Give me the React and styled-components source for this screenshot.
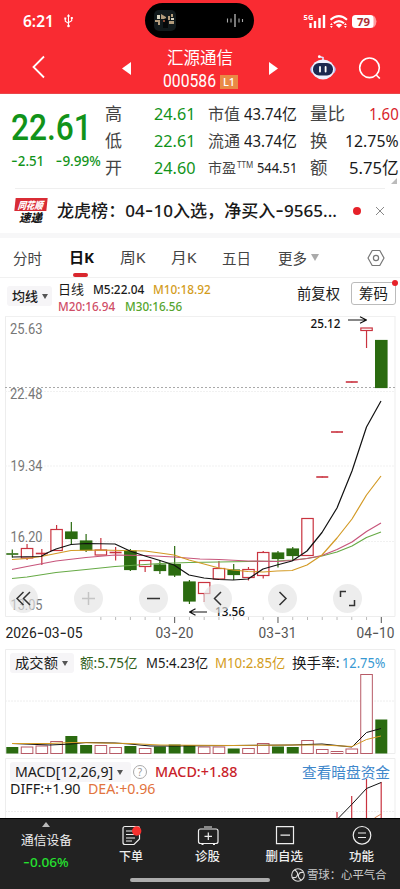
import React, { useLayoutEffect, useRef, useState } from "react";
import styled, { createGlobalStyle } from "styled-components";

const RED = "#f92b32";
const UP = "#c9333f";
const DOWN = "#2b6b10";

// Text squeezed (or stretched) horizontally to a given width
const Fit = ({ w, children, ...rest }) => {
  const ref = useRef(null);
  const [scale, setScale] = useState(1);
  useLayoutEffect(() => {
    setScale(w / ref.current.offsetWidth);
  }, [w, children]);
  return (
    <FitBox $w={w} {...rest}>
      <FitInner ref={ref} style={{ transform: `scaleX(${scale})` }}>
        {children}
      </FitInner>
    </FitBox>
  );
};

// [kind, body top, body bottom, wick top, wick bottom, volume top]
const candles = [
  ["g", 553.5, 554.5, 549.5, 557.5, 747],
  ["r", 548.5, 558, 544, 560, 747],
  ["r", 553, 554, 549, 565, 746],
  ["r", 529.5, 550.5, 525, 550.5, 741.5],
  ["g", 532, 538.5, 522, 544, 736],
  ["g", 541, 550, 534, 552, 745],
  ["r", 550, 555, 538, 555, 745.5],
  ["r", 552, 553, 547, 560.5, 747.5],
  ["g", 551, 569.5, 549, 571, 746],
  ["r", 560.5, 566.5, 560.5, 572, 748.5],
  ["g", 565, 570.5, 560, 574, 746.5],
  ["g", 564.5, 575, 546, 577, 744.5],
  ["g", 582, 601, 580, 604, 745],
  ["r", 582.5, 593.5, 582.5, 602, 747],
  ["r", 568.5, 579, 561, 579, 747],
  ["g", 570, 574.5, 564, 580, 748.5],
  ["r", 569.5, 577.5, 567, 580.5, 748.5],
  ["r", 552.5, 575.5, 551, 578.5, 743.5],
  ["g", 553, 558.5, 551, 567.5, 746.5],
  ["g", 549, 555.5, 547, 560, 747],
  ["r", 518.5, 555.5, 518.5, 555.5, 740.5],
  ["r", 476.5, 477.5, 477, 477, 749.5],
  ["r", 431.5, 432.5, 432, 432, 751.5],
  ["r", 381.5, 382.5, 382, 382, 749],
  ["r", 328, 330.5, 328, 348, 674.5],
  ["g", 340.5, 387.5, 340.5, 387.5, 719.5],
];

const cx = (i) => 12.3 + i * 14.76;

const Candle = ({ i, data }) => {
  const [kind, top, bottom, high, low] = data;
  const color = kind === "g" ? DOWN : UP;
  const x = cx(i);
  return (
    <g stroke={color} strokeWidth="1.2">
      <path d={`M${x} ${high}V${top}M${x} ${bottom}V${low}`} />
      {bottom - top <= 1 ? (
        <path d={`M${x - 6} ${top + 0.5}H${x + 6}`} strokeWidth="1.6" />
      ) : (
        <rect
          x={x - 5.7}
          y={top}
          width="11.4"
          height={bottom - top}
          fill={kind === "g" ? DOWN : "#fff"}
        />
      )}
    </g>
  );
};

const SvgDash = () => <tspan fontFamily="Inter" fontSize="16">-</tspan>;

const KLineChart = () => (
  <svg width="400" height="333" viewBox="0 316 400 333">
    <path d="M5.5 316V616.5H395V316" fill="none" stroke="#ededed" />
    <path d="M5 316.5H395" stroke="#f0f0f0" />
    <path d="M5 391.5H395M5 466H395M5 541.5H395" stroke="#f1f1f1" strokeDasharray="2 1" />
    <path d="M5 387.5H395" stroke="#a9a9a9" strokeDasharray="2 2" />
    {candles.map((c, i) => (
      <Candle key={i} i={i} data={c} />
    ))}
    <g fill="none" strokeWidth="1.2" strokeLinejoin="round">
      <polyline
        stroke="#67aa46"
        points="12,578.5 27,577 56,572.5 86,569.5 115,566.5 160,563.5 189,562.5 248,561.5 277,561 292,560 307,558.5 322,556 337,552 352,546 366.5,537.5 381,532"
      />
      <polyline
        stroke="#c7557b"
        points="12,569.5 27,566.5 56,561 86,557.5 115,555 145,555.5 174,557 200,559 219,559.5 248,561 277,561.5 292,560.5 307,558.5 322,555.5 337,549.5 352,542 366.5,531.5 381,523"
      />
      <polyline
        stroke="#d39a25"
        points="12,559.5 27,558.5 41,556.5 71,550.5 100,550 145,551 160,553 174,555 189,560 204,564 219,568 233,570 248,571.5 263,572 277,571 292,570.5 307,565 322,555 337,538 352,519 366.5,495 381,476"
      />
      <polyline
        stroke="#111"
        points="12,557 41,556.5 47,553 56,549 71,544.5 86,543.5 115,544 130,551 145,556 160,560.5 174,565 189,575 204,578 219,579.5 233,580 248,579 263,569 277,565 292,561 307,551 322,532.5 337,508 352,471 366.5,427 381,401"
      />
      <path
        stroke="#111"
        d="M348 320H366M360 316.8L366.5 320L360 323.2M207 612H190M195.5 608.8L189.5 612L195.5 615.2"
      />
    </g>
    <PriceText x="10" y="333.5" textLength="32.5">25.63</PriceText>
    <PriceText x="10" y="398.5" textLength="32.5">22.48</PriceText>
    <PriceText x="10.5" y="470.5" textLength="32">19.34</PriceText>
    <PriceText x="10.5" y="541.5" textLength="32">16.20</PriceText>
    <PriceText x="10.5" y="610" textLength="32">13.05</PriceText>
    <MarkText x="310.5" y="328" textLength="30">25.12</MarkText>
    <MarkText x="215" y="615.5" textLength="30">13.56</MarkText>
    {candles.map((c, i) =>
      i < 6 ? null : (
        <path
          key={i}
          d={`M${cx(i)} 617V${[11, 18, 25].includes(i) ? 623 : 620}`}
          stroke={[11, 18, 25].includes(i) ? "#555" : "#bbb"}
        />
      )
    )}
    <DateText x="5.5" y="638" textLength="77" fill="#222">2026<SvgDash />03<SvgDash />05</DateText>
    <DateText x="155.5" y="638" textLength="38">03<SvgDash />20</DateText>
    <DateText x="258.5" y="638" textLength="38">03<SvgDash />31</DateText>
    <DateText x="356.5" y="638" textLength="38">04<SvgDash />10</DateText>
  </svg>
);

const VolumeChart = () => (
  <svg width="400" height="109" viewBox="0 649 400 109">
    <path d="M5.5 753.5V649.5H395V753.5Z" fill="none" stroke="#ededed" />
    <path d="M5 701H395" stroke="#eee" strokeDasharray="2 1" />
    {candles.map((c, i) => (
      <rect
        key={i}
        x={cx(i) - (c[0] === "g" ? 6 : 5.8)}
        y={c[5]}
        width={c[0] === "g" ? 12 : 11.6}
        height={753.5 - c[5]}
        fill={c[0] === "g" ? DOWN : "#fff"}
        stroke={c[0] === "g" ? "none" : "#b75b67"}
      />
    ))}
    <polyline
      fill="none"
      stroke="#111"
      points="12,743.5 50,745 71,744 86,742.5 115,743 130,744 150,746 174,746 233,745.5 292,745 322,744 352,747 366.5,732.5 381,728.5"
    />
    <polyline
      fill="none"
      stroke="#d39a25"
      points="12,743.5 50,743.5 71,742.5 100,743 130,743.5 160,745 233,745.5 292,745 322,745 352,746.5 366.5,739.5 381,736"
    />
  </svg>
);

const MacdChart = () => (
  <svg width="400" height="60" viewBox="0 758 400 60">
    <path d="M5.5 818V758.5H395V818" fill="none" stroke="#ededed" />
    <path d="M5 811.5H395" stroke="#eee" strokeDasharray="2 1" />
    <path d="M337 812V818M351.7 796V818M366.5 779V818M381.2 782V818" stroke={UP} strokeWidth="1.2" />
    <path d="M338.5 818L351.7 804.5L366.5 788.5L381.2 782.5" fill="none" stroke="#111" />
    <path d="M374.5 818L381.2 814" stroke="#d98555" />
  </svg>
);

const StatusBar = () => (
  <Status>
    <Clock>
      <Fit w={31}>6:21</Fit>
    </Clock>
    <UsbIcon width="9" height="14" viewBox="0 0 9 14" fill="none" stroke="#fff" strokeWidth="1.1">
      <path d="M4.5 1V11M1.3 5V7.2L4.5 9.4M7.7 4.5V6.6L4.5 8.6" />
      <circle cx="4.5" cy="12" r="1.3" fill="#fff" stroke="none" />
      <path d="M4.5 0L6.2 2.6H2.8Z" fill="#fff" stroke="none" />
      <path d="M.3 3.6H2.3V5.4H.3ZM6.8 3H8.8V5H6.8Z" fill="#fff" stroke="none" />
    </UsbIcon>
    <Island>
      <svg width="22" height="21" viewBox="0 0 22 21">
        <rect width="22" height="21" rx="5" fill="#121a1c" />
        <path d="M1 10H6V15H4V12H1ZM7 4L12 7V9H7ZM14 6H16V10H14ZM17 4H19V7H17ZM15 11H20V14H15Z" fill="#b39c7c" />
        <path d="M3 5H6V9H3ZM17 8H20V10H17Z" fill="#d8d2bf" />
        <path d="M11 8L14 10V18H9V12Z" fill="#06090a" />
        <path d="M9 10H11V12H9Z" fill="#8a4a35" />
      </svg>
      <svg width="18" height="13" viewBox="0 0 18 13" stroke="#aaa" strokeWidth="1.1">
        <path d="M1.5 4.5V8.5M5 4.5V8.5M13 4.5V8.5M16.5 5V8" />
        <path d="M9 0V13" stroke="#ddd" />
      </svg>
    </Island>
    <Signals>
      <svg width="74" height="18" viewBox="304 11 74 18">
        <text x="304.5" y="18.5" fontSize="7.5" fontWeight="700" fill="#fff" textLength="10">5G</text>
        <path d="M311.5 27V22M316 27V20M320.5 27V17M325 27V14" stroke="#fff" strokeWidth="2.4" />
        <g fill="none" stroke="#fff" strokeWidth="2.1">
          <path d="M331.5 18.8Q340 11.6 348 18.8" />
          <path d="M334.8 22.3Q340 17.8 345 22.3" />
        </g>
        <path d="M340 27L336.8 24Q340 21.6 343.2 24Z" fill="#fff" />
        <path d="M331 24L332.4 22L333.8 24ZM331 25L332.4 27L333.8 25ZM345 24L346.4 22L347.8 24ZM345 25L346.4 27L347.8 25Z" fill="#fff" />
        <rect x="353" y="14" width="22" height="13" rx="3.5" fill="#fff" />
        <path d="M374.5 14.2Q377.5 17 377.5 20.5T374.5 26.8Z" fill="#ff9a9d" />
        <text x="358" y="24.7" fontSize="11" fontWeight="700" fill="#ad3035" textLength="13" lengthAdjust="spacingAndGlyphs">79</text>
      </svg>
    </Signals>
  </Status>
);

const TitleBar = () => (
  <Title>
    <BackIcon width="13" height="24" viewBox="0 0 13 24">
      <path d="M12 1.5L1.5 12L12 22.5" fill="none" stroke="#fff" strokeWidth="1.8" />
    </BackIcon>
    <PrevIcon width="9" height="13" viewBox="0 0 9 13">
      <path d="M9 0V13L0 6.5Z" fill="#fff" />
    </PrevIcon>
    <StockName>
      <Fit w={66}>汇源通信</Fit>
      <CodeRow>
        <Code>
          <Fit w={53}>000586</Fit>
        </Code>
        <Level>L1</Level>
      </CodeRow>
    </StockName>
    <NextIcon width="9" height="13" viewBox="0 0 9 13">
      <path d="M0 0V13L9 6.5Z" fill="#fff" />
    </NextIcon>
    <RobotIcon width="26" height="25" viewBox="0 0 26 25">
      <path d="M9 1.5L13 2.5V6" fill="none" stroke="#dfe1ff" strokeWidth="1.6" />
      <circle cx="9.3" cy="1.7" r="1.4" fill="#fff" />
      <ellipse cx="13" cy="14.5" rx="12.7" ry="7" fill="#b9bdf3" />
      <ellipse cx="13" cy="14.4" rx="11.2" ry="10" fill="#eef0ff" />
      <rect x="3" y="8" width="20" height="12.5" rx="6" fill="#1c2850" />
      <path d="M10 12V16.5M15.6 12V16.5" stroke="#fff" strokeWidth="1.8" strokeLinecap="round" />
    </RobotIcon>
    <SearchIcon width="24" height="24" viewBox="0 0 24 24" fill="none" stroke="#fff" strokeWidth="1.6">
      <circle cx="11.5" cy="11.8" r="9.8" />
      <path d="M18 18.7L21.8 22.5" />
    </SearchIcon>
  </Title>
);

const Quote = () => (
  <QuotePanel>
    <PriceBlock>
      <BigPrice>
        <Fit w={81}>22.61</Fit>
      </BigPrice>
      <Change>
        <Fit w={33.5}><Dash>-</Dash>2.51</Fit>
        <Fit w={45}><Dash>-</Dash>9.99%</Fit>
      </Change>
    </PriceBlock>
    <Column $w={90}>
      <Cell><Label>高</Label><Value $color="#11931a"><Fit w={41}>24.61</Fit></Value></Cell>
      <Cell><Label>低</Label><Value $color="#11931a"><Fit w={41}>22.61</Fit></Value></Cell>
      <Cell><Label>开</Label><Value $color="#11931a"><Fit w={41}>24.60</Fit></Value></Cell>
    </Column>
    <Column $w={89}>
      <Cell><Label $size={16}>市值</Label><Value $size={16}><Fit w={53}>43.74亿</Fit></Value></Cell>
      <Cell><Label $size={16}>流通</Label><Value $size={16}><Fit w={53}>43.74亿</Fit></Value></Cell>
      <Cell>
        <Label $size={14}>市盈<Sup>TTM</Sup></Label>
        <Value $size={14.5}><Fit w={40}>544.51</Fit></Value>
      </Cell>
    </Column>
    <Column $w={89}>
      <Cell><Label $size={17.5}>量比</Label><Value $color="#d8232b"><Fit w={30}>1.60</Fit></Value></Cell>
      <Cell><Label $size={17.5}>换</Label><Value><Fit w={54}>12.75%</Fit></Value></Cell>
      <Cell><Label $size={17.5}>额</Label><Value><Fit w={50}>5.75亿</Fit></Value></Cell>
    </Column>
    <Corner />
  </QuotePanel>
);

const News = () => (
  <NewsBar>
    <NewsLogo>
      <LogoTop><Fit w={25}>同花顺</Fit></LogoTop>
      <LogoBottom><Fit w={23}>速递</Fit></LogoBottom>
    </NewsLogo>
    <NewsText>
      <Fit w={280}>龙虎榜：04<Dash>-</Dash>10入选，净买入<Dash>-</Dash>9565...</Fit>
    </NewsText>
    <NewsDot />
    <svg width="10" height="10" viewBox="0 0 10 10" stroke="#888" strokeWidth="1">
      <path d="M1 1L9 9M9 1L1 9" />
    </svg>
  </NewsBar>
);

const App = () => (
  <Screen>
    <GlobalStyle />
    <Header>
      <StatusBar />
      <TitleBar />
    </Header>
    <Quote />
    <News />
    <Tabs>
      <Tab $w={29}>分时</Tab>
      <Tab $w={24} $active><Fit w={25}>日K</Fit></Tab>
      <Tab $w={24}><Fit w={25}>周K</Fit></Tab>
      <Tab $w={24}><Fit w={25}>月K</Fit></Tab>
      <Tab $w={29}>五日</Tab>
      <Tab $w={41}>更多<Caret $color="#aaa" $size={4.5} /></Tab>
      <HexIcon width="18" height="18" viewBox="0 0 18 18" fill="none" stroke="#777" strokeWidth="1.2">
        <path d="M5.2 1.5H12.8L17 9L12.8 16.5H5.2L1 9Z" strokeLinejoin="round" />
        <circle cx="9" cy="9" r="2.6" />
      </HexIcon>
    </Tabs>
    <Indicators>
      <Chip $w={45}><Fit w={26}>均线</Fit><Caret /></Chip>
      <Averages>
        <AvgRow>
          <Ink><Fit w={26}>日线</Fit></Ink>
          <Ink $medium><Fit w={51}>M5:22.04</Fit></Ink>
          <Ink $medium $color="#d39c1b"><Fit w={58}>M10:18.92</Fit></Ink>
        </AvgRow>
        <AvgRow>
          <Ink $medium $color="#cf4d66"><Fit w={57.5}>M20:16.94</Fit></Ink>
          <Ink $medium $color="#55a52e"><Fit w={57.5}>M30:16.56</Fit></Ink>
        </AvgRow>
      </Averages>
      <Adjust><Fit w={43.5}>前复权</Fit></Adjust>
      <ChipsButton><Fit w={29}>筹码</Fit></ChipsButton>
    </Indicators>
    <ChartPanel>
      <KLineChart />
      <Controls>
        <Round>
          <path d="M14.5 8L8 14.5L14.5 21M21 8L14.5 14.5L21 21" />
        </Round>
        <Round $faint>
          <path d="M14.5 8V21M8 14.5H21" />
        </Round>
        <Round>
          <path d="M8 14.5H21" />
        </Round>
        <Round>
          <path d="M18 8L11.5 14.5L18 21" />
        </Round>
        <Round>
          <path d="M11.5 8L18 14.5L11.5 21" />
        </Round>
        <Round>
          <path d="M7.5 13V7.5H13M21.5 16V21.5H16" />
        </Round>
      </Controls>
    </ChartPanel>
    <ChartPanel>
      <VolumeChart />
      <Legend>
        <Chip $w={64}><Fit w={43}>成交额</Fit><Caret /></Chip>
        <Ink $size={14} $ml={6} $color="#315f1c"><Fit w={58}>额:5.75亿</Fit></Ink>
        <Ink $size={14} $ml={8}><Fit w={62}>M5:4.23亿</Fit></Ink>
        <Ink $size={14} $ml={7} $color="#d39c1b"><Fit w={70}>M10:2.85亿</Fit></Ink>
        <Ink $size={14} $ml={7}><Fit w={48}>换手率:</Fit></Ink>
        <Ink $size={14} $ml={2} $color="#3799d2"><Fit w={43}>12.75%</Fit></Ink>
      </Legend>
    </ChartPanel>
    <ChartPanel>
      <MacdChart />
      <Legend>
        <Chip $w={121}><Fit w={98}>MACD[12,26,9]</Fit><Caret /></Chip>
        <Help>?</Help>
        <Ink $size={14} $ml={8} $medium $color="#c91f2b"><Fit w={83}>MACD:+1.88</Fit></Ink>
        <FundLink><Fit w={88}>查看暗盘资金</Fit></FundLink>
      </Legend>
      <SubLegend>
        <Ink $size={14}><Fit w={70.5}>DIFF:+1.90</Fit></Ink>
        <Ink $size={14} $ml={7} $color="#e2733d"><Fit w={68}>DEA:+0.96</Fit></Ink>
      </SubLegend>
    </ChartPanel>
    <BottomBar>
      <Sector>
        <UpMark />
        <Fit w={51}>通信设备</Fit>
        <SectorChange><Fit w={46}><Dash>-</Dash>0.06%</Fit></SectorChange>
      </Sector>
      <Action>
        <svg width="22" height="21" viewBox="119 825 22 21" fill="none" stroke="#eee" strokeWidth="1.2">
          <path d="M124 826.5H137Q138.5 826.5 138.5 828V839L133 844.5H124Q122 844.5 122 842.5V828.5Q122 826.5 124 826.5Z" />
          <path d="M125 831H132M125 834.5H135M125 838H134M125 841H131" />
          <circle cx="135.7" cy="831" r="4.7" fill="#f6312f" stroke="none" />
        </svg>
        <Fit w={24}>下单</Fit>
      </Action>
      <Action>
        <svg width="22" height="21" viewBox="196 825 22 21" fill="none" stroke="#eee" strokeWidth="1.2">
          <rect x="197.5" y="829" width="19.5" height="14.5" rx="2" />
          <path d="M203 827H211M207.3 832.5V840M203.5 836.3H211M200.5 844.5H202.5M212 844.5H214" />
        </svg>
        <Fit w={25}>诊股</Fit>
      </Action>
      <Action>
        <svg width="22" height="21" viewBox="273 825 22 21" fill="none" stroke="#eee" strokeWidth="1.2">
          <path d="M275.5 826.7H292.5V843.7H275.5ZM279.5 835.2H289" />
        </svg>
        <Fit w={38}>删自选</Fit>
      </Action>
      <Action>
        <svg width="22" height="21" viewBox="350 825 22 21" fill="none" stroke="#eee" strokeWidth="1.2">
          <circle cx="361" cy="835.3" r="8.8" />
          <path d="M357 833H365M357 837.5H365" />
        </svg>
        <Fit w={25}>功能</Fit>
      </Action>
      <HomeLine />
      <Watermark>
        <svg width="14" height="14" viewBox="0 0 14 14" fill="none" stroke="#ddd" strokeWidth="1.1">
          <circle cx="7" cy="7" r="6.3" />
          <path d="M3.5 1.8Q8.5 5 5.5 8.8Q4.5 10 1.5 9.5M10.5 12.2Q5.5 9 8.5 5.2Q9.5 4 12.5 4.5" />
        </svg>
        <Fit w={80}>雪球：心平气合</Fit>
      </Watermark>
    </BottomBar>
  </Screen>
);

const GlobalStyle = createGlobalStyle`
  * {
    box-sizing: border-box;
  }

  body {
    margin: 0;
    background: #fff;
    font-family: "Noto Sans", "Noto Sans CJK SC", sans-serif;
    color: #1a1a1a;
  }

  svg {
    display: block;
    flex: none;
  }
`;

const Screen = styled.main`
  display: flex;
  flex-direction: column;
  width: 400px;
  height: 889px;
  overflow: hidden;
  background: #fff;
`;

const FitBox = styled.span`
  display: block;
  flex: none;
  width: ${(p) => p.$w}px;
  line-height: 1;
  white-space: nowrap;
`;

const FitInner = styled.span`
  display: inline-block;
  line-height: 1;
  transform-origin: left center;
  vertical-align: top;
`;

const Dash = styled.span`
  font-family: Inter, sans-serif;
  font-size: 1.1em;
  line-height: 0;
`;

const Header = styled.header`
  flex: none;
  height: 94px;
  background: ${RED};
  color: #fff;
  border-bottom: 1px solid #e9464a;
`;

const Status = styled.div`
  display: flex;
  align-items: center;
  height: 41px;
  padding: 0 23px;
`;

const Clock = styled.div`
  padding-top: 2px;
  font-size: 16.5px;
  font-weight: 600;
`;

const UsbIcon = styled.svg`
  margin-left: 10px;
`;

const Island = styled.div`
  display: flex;
  align-items: center;
  justify-content: space-between;
  width: 110px;
  height: 35px;
  margin-left: 72px;
  padding: 0 10px 0 9px;
  border-radius: 18px;
  background: #000;
`;

const Signals = styled.div`
  margin-left: 49px;
`;

const Title = styled.div`
  display: flex;
  align-items: center;
  height: 52px;
  padding-left: 32px;
`;

const BackIcon = styled.svg`
  margin-right: 77px;
`;

const PrevIcon = styled.svg`
  margin: 2px 32px 0 0;
`;

const StockName = styled.div`
  display: flex;
  flex-direction: column;
  gap: 7px;
  width: 75px;
  padding: 6px 0 0 4px;
  font-size: 16.5px;
`;

const CodeRow = styled.div`
  display: flex;
  align-items: center;
  gap: 4px;
  margin-left: -4px;
`;

const Code = styled.div`
  font-family: Roboto, sans-serif;
  font-size: 17.5px;
`;

const Level = styled.span`
  flex: none;
  width: 18px;
  height: 14px;
  background: #e98a45;
  font-size: 11px;
  font-weight: 500;
  line-height: 14px;
  text-align: center;
`;

const NextIcon = styled.svg`
  margin: 2px 32px 0 31px;
`;

const RobotIcon = styled.svg`
  margin-right: 23px;
`;

const SearchIcon = styled.svg`
  margin: 2px 0 0 -1px;
`;

const QuotePanel = styled.section`
  position: relative;
  display: flex;
  flex: none;
  gap: 13px;
  height: 94px;
  padding-left: 11px;
`;

const PriceBlock = styled.div`
  flex: none;
  width: 81px;
  padding-top: 16px;
  color: #11931a;
`;

const BigPrice = styled.div`
  font-family: Roboto, sans-serif;
  font-size: 36px;
  font-weight: 500;
`;

const Change = styled.div`
  display: flex;
  gap: 11px;
  margin-top: 9px;
  font-size: 13.5px;
  font-weight: 500;
`;

const Column = styled.div`
  display: flex;
  flex: none;
  flex-direction: column;
  width: ${(p) => p.$w}px;
  padding-top: 6px;
`;

const Cell = styled.div`
  display: flex;
  align-items: center;
  justify-content: space-between;
  height: 27px;
`;

const Label = styled.span`
  display: flex;
  font-size: ${(p) => p.$size || 17}px;
  line-height: 1;
  color: #444;
`;

const Sup = styled.span`
  margin-left: 1px;
  font-size: 8px;
`;

const Value = styled.span`
  font-size: ${(p) => p.$size || 17}px;
  color: ${(p) => p.$color || "#1a1a1a"};
`;

const Corner = styled.i`
  position: absolute;
  right: 3px;
  bottom: 4px;
  border: 3.5px solid transparent;
  border-right-color: #bbb;
  border-bottom-color: #bbb;
`;

const NewsBar = styled.section`
  display: flex;
  flex: none;
  align-items: center;
  height: 50px;
  padding-left: 15px;
  border-bottom: 5px solid #f7f7f8;
  background: linear-gradient(#efefef, #efefef) 15px 0 / 370px 1px no-repeat;
`;

const NewsLogo = styled.div`
  width: 32px;
  margin-right: 10px;
  font-weight: 900;
  font-style: italic;
`;

const LogoTop = styled.div`
  height: 13px;
  padding: 2px 0 0 3px;
  background: #d92c35;
  color: #fff;
  font-size: 10px;
  transform: skewX(-6deg);
`;

const LogoBottom = styled.div`
  padding: 1px 0 0 4px;
  font-size: 11.5px;
`;

const NewsText = styled.div`
  width: 296px;
  font-size: 17px;
  font-weight: 500;
`;

const NewsDot = styled.i`
  width: 8px;
  height: 8px;
  margin-right: 14px;
  border-radius: 50%;
  background: #e62129;
`;

const Tabs = styled.nav`
  display: flex;
  flex: none;
  gap: 27px;
  height: 40px;
  padding-left: 13px;
  border-bottom: 1px solid #f1f1f1;
`;

const Tab = styled.div`
  position: relative;
  display: flex;
  align-items: center;
  flex: none;
  width: ${(p) => p.$w}px;
  font-size: 14.5px;
  font-weight: ${(p) => (p.$active ? 700 : 400)};
  white-space: nowrap;
  color: ${(p) => (p.$active ? "#111" : "#444")};

  &:after {
    content: "";
    display: ${(p) => (p.$active ? "block" : "none")};
    position: absolute;
    left: 4px;
    bottom: 0;
    width: 15px;
    height: 4px;
    border-radius: 2px;
    background: #d9272e;
  }
`;

const Caret = styled.i`
  display: block;
  flex: none;
  margin-left: 4px;
  border: ${(p) => p.$size || 3.5}px solid transparent;
  border-top: ${(p) => (p.$size ? 7 : 5)}px solid ${(p) => p.$color || "#555"};
  border-bottom: 0;
`;

const HexIcon = styled.svg`
  margin: 11px 0 0 21px;
`;

const Indicators = styled.section`
  display: flex;
  flex: none;
  align-items: flex-start;
  height: 38px;
  padding-left: 7px;
`;

const Chip = styled.div`
  display: flex;
  flex: none;
  align-items: center;
  width: ${(p) => p.$w}px;
  height: 20px;
  padding-left: 5px;
  border-radius: 3px;
  background: #f6f5f7;
  font-size: 14px;

  ${Indicators} & {
    margin-top: 8px;
    font-size: 13px;
    font-weight: 500;
  }
`;

const Averages = styled.div`
  width: 240px;
  padding: 5px 0 0 6px;
`;

const AvgRow = styled.div`
  display: flex;
  gap: 9px;
  height: 17px;
`;

const Ink = styled.span`
  flex: none;
  margin-left: ${(p) => p.$ml || 0}px;
  font-size: ${(p) => p.$size || 13}px;
  font-weight: ${(p) => (p.$medium ? 500 : 400)};
  color: ${(p) => p.$color || "#1a1a1a"};
`;

const Adjust = styled.div`
  width: 59px;
  padding: 8px 0 0 5px;
  font-size: 14.5px;
`;

const ChipsButton = styled.button`
  position: relative;
  width: 45px;
  height: 23px;
  margin-top: 4px;
  padding: 0 0 0 7px;
  border: 1px solid #bbb;
  border-radius: 3px;
  background: #fff;
  font: 400 14.5px "Noto Sans CJK SC", sans-serif;
  color: #1a1a1a;
  text-align: left;

  &:after {
    content: "";
    position: absolute;
    top: -3px;
    right: -3px;
    width: 6px;
    height: 6px;
    border-radius: 50%;
    background: #e62129;
  }
`;

const ChartPanel = styled.section`
  position: relative;
  flex: none;
`;

const PriceText = styled.text.attrs({ lengthAdjust: "spacingAndGlyphs" })`
  font: 14px Roboto, sans-serif;
  fill: #777;
`;

const DateText = styled.text.attrs({ lengthAdjust: "spacingAndGlyphs" })`
  font: 14px Roboto, sans-serif;
  fill: ${(p) => p.fill || "#555"};
`;

const MarkText = styled.text.attrs({ lengthAdjust: "spacingAndGlyphs" })`
  font: 500 12.5px "Noto Sans", sans-serif;
  fill: #111;
`;

const Controls = styled.div`
  position: absolute;
  top: 268px;
  left: 9px;
  display: flex;
  justify-content: space-between;
  width: 353px;
`;

const Round = styled.svg.attrs({ width: 29, height: 29, viewBox: "0 0 29 29" })`
  border-radius: 50%;
  background: rgba(228, 228, 228, 0.65);
  fill: none;
  stroke: ${(p) => (p.$faint ? "#c4c4c4" : "#333")};
  stroke-width: 1.5;
`;

const Legend = styled.div`
  position: absolute;
  top: 4px;
  left: 10px;
  right: 10px;
  display: flex;
  align-items: center;
`;

const SubLegend = styled.div`
  position: absolute;
  top: 24px;
  left: 10px;
  display: flex;
`;

const Help = styled.span`
  width: 14px;
  height: 14px;
  margin-left: 2px;
  border: 1px solid #aaa;
  border-radius: 50%;
  font-size: 10px;
  line-height: 12px;
  text-align: center;
  color: #999;
`;

const FundLink = styled.a`
  margin-left: auto;
  font-size: 14.5px;
  color: #3f87cb;
`;

const BottomBar = styled.footer`
  position: relative;
  display: flex;
  flex: none;
  height: 71px;
  border-top: 1px solid #000;
  background: #222;
  color: #eee;
  font-size: 12.5px;
`;

const Sector = styled.div`
  display: flex;
  flex-direction: column;
  align-items: center;
  width: 92px;
  padding-top: 3px;
`;

const UpMark = styled.i`
  margin-bottom: 8px;
  border: 4.5px solid transparent;
  border-top: 0;
  border-bottom: 5px solid #bbb;
`;

const SectorChange = styled.div`
  margin-top: 8px;
  font-size: 13px;
  font-weight: 500;
  color: #25e32f;
`;

const Action = styled.div`
  display: flex;
  flex-direction: column;
  align-items: center;
  gap: 5px;
  width: 77px;
  padding-top: 6px;
  font-weight: 500;
`;

const HomeLine = styled.i`
  position: absolute;
  left: 130px;
  bottom: 7px;
  width: 140px;
  height: 4px;
  border-radius: 2px;
  background: #adadad;
`;

const Watermark = styled.div`
  position: absolute;
  left: 291px;
  bottom: 7px;
  display: flex;
  align-items: center;
  gap: 2px;
  font-size: 11.5px;
  color: #ccc;
`;

export default App;
